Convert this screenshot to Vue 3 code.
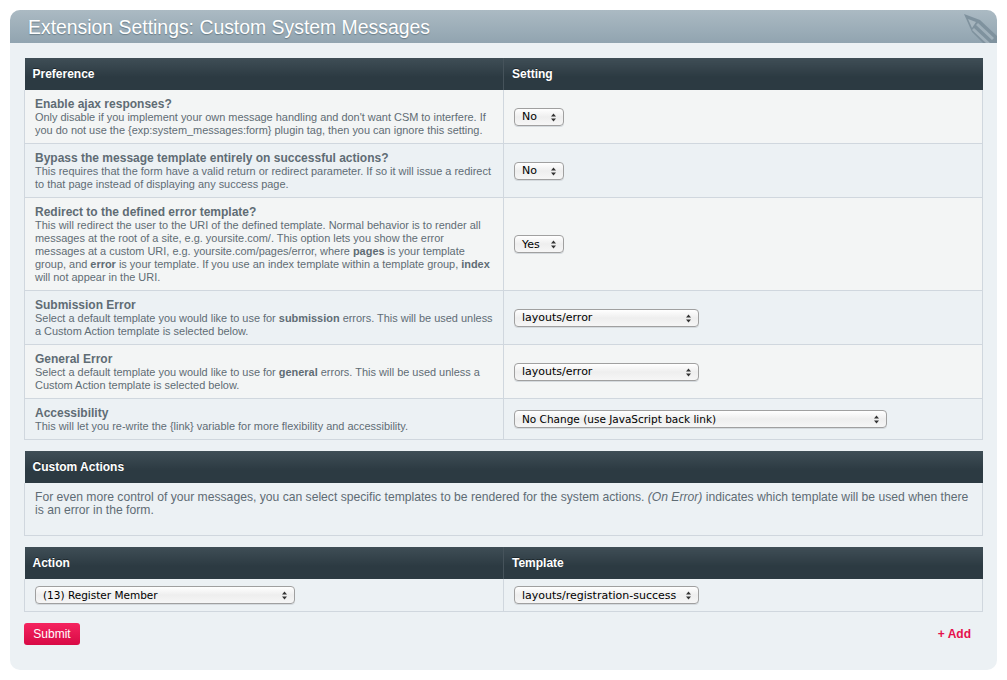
<script setup>
const settings = [
  { title: 'Enable ajax responses?', html: "Only disable if you implement your own message handling and don't want CSM to interfere. If you do not use the {exp:system_messages:form} plugin tag, then you can ignore this setting.", value: 'No', size: 'tiny' },
  { title: 'Bypass the message template entirely on successful actions?', html: 'This requires that the form have a valid return or redirect parameter. If so it will issue a redirect to that page instead of displaying any success page.', value: 'No', size: 'tiny' },
  { title: 'Redirect to the defined error template?', html: 'This will redirect the user to the URI of the defined template. Normal behavior is to render all messages at the root of a site, e.g. yoursite.com/. This option lets you show the error messages at a custom URI, e.g. yoursite.com/pages/error, where <b>pages</b> is your template group, and <b>error</b> is your template. If you use an index template within a template group, <b>index</b> will not appear in the URI.', value: 'Yes', size: 'tiny' },
  { title: 'Submission Error', html: 'Select a default template you would like to use for <b>submission</b> errors. This will be used unless a Custom Action template is selected below.', value: 'layouts/error', size: 'mid' },
  { title: 'General Error', html: 'Select a default template you would like to use for <b>general</b> errors. This will be used unless a Custom Action template is selected below.', value: 'layouts/error', size: 'mid' },
  { title: 'Accessibility', html: 'This will let you re-write the {link} variable for more flexibility and accessibility.', value: 'No Change (use JavaScript back link)', size: 'wide' },
]
</script>

<template>
  <div class="page">
    <div class="panel">
      <div class="heading">
        <h2>Extension Settings: Custom System Messages</h2>
        <svg class="pencil" width="33" height="29" viewBox="0 0 33 29">
          <path d="M0 0 L16 6 L33 22 L33 29 L19 29 L8 18 Z" fill="#7f929e" />
          <path d="M4 5 L12 8 L8 14 Z" fill="#a6b5be" />
          <path d="M14 9 L30 24 L28 26 L12 11 Z M10 14 L26 29 L22 29 L8 16 Z" fill="#a0b0ba" />
        </svg>
      </div>
      <div class="content">
        <table class="grid">
          <thead>
            <tr><th class="col-a">Preference</th><th>Setting</th></tr>
          </thead>
          <tbody>
            <tr v-for="(row, i) in settings" :key="row.title" :class="{ odd: i % 2 === 0 }">
              <td class="col-a pref">
                <strong>{{ row.title }}</strong>
                <div class="desc" v-html="row.html"></div>
              </td>
              <td class="set">
                <div class="select" :class="row.size">
                  <span>{{ row.value }}</span>
                  <svg class="arrows" width="5" height="9" viewBox="0 0 5 9"><path d="M2.5 0.5 L5 3.5 H0 Z M0 5.5 H5 L2.5 8.5 Z" fill="#333" /></svg>
                </div>
              </td>
            </tr>
          </tbody>
        </table>

        <table class="grid notes">
          <thead>
            <tr><th>Custom Actions</th></tr>
          </thead>
          <tbody>
            <tr>
              <td class="intro">For even more control of your messages, you can select specific templates to be rendered for the system actions. <em>(On Error)</em> indicates which template will be used when there is an error in the form.</td>
            </tr>
          </tbody>
        </table>

        <table class="grid actions">
          <thead>
            <tr><th class="col-a">Action</th><th>Template</th></tr>
          </thead>
          <tbody>
            <tr>
              <td class="col-a slim">
                <div class="select action">
                  <span>(13) Register Member</span>
                  <svg class="arrows" width="5" height="9" viewBox="0 0 5 9"><path d="M2.5 0.5 L5 3.5 H0 Z M0 5.5 H5 L2.5 8.5 Z" fill="#333" /></svg>
                </div>
              </td>
              <td class="slim">
                <div class="select tpl">
                  <span>layouts/registration-success</span>
                  <svg class="arrows" width="5" height="9" viewBox="0 0 5 9"><path d="M2.5 0.5 L5 3.5 H0 Z M0 5.5 H5 L2.5 8.5 Z" fill="#333" /></svg>
                </div>
              </td>
            </tr>
          </tbody>
        </table>

        <div class="foot">
          <button class="submit" type="button">Submit</button>
          <a class="add">+ Add</a>
        </div>
      </div>
    </div>
  </div>
</template>

<style>
html, body {
  background: #fff;
}
</style>

<style scoped>
.page {
  padding: 10px;
  font-family: "Liberation Sans", Arial, sans-serif;
  font-size: 10.95px;
  line-height: 13px;
  color: #5f6c74;
}

.panel {
  background: #ecf1f4;
  border-radius: 10px;
  overflow: hidden;
  height: 660px;
}

.heading {
  position: relative;
  height: 33px;
  background: linear-gradient(#abbac3, #91a4b0);
  overflow: hidden;
}

.heading h2 {
  margin: 0;
  padding-left: 18px;
  font-size: 19.4px;
  font-weight: normal;
  line-height: 35px;
  color: #fff;
  text-shadow: 0 1px 1px rgba(60, 80, 90, 0.5);
}

.pencil {
  position: absolute;
  right: 0;
  top: 4px;
}

.content {
  padding: 15px 14px 0;
}

.grid {
  width: 959px;
  border-collapse: collapse;
  table-layout: fixed;
}

.grid th,
.grid td {
  box-sizing: border-box;
}

.grid th {
  height: 32px;
  padding: 0 8px;
  text-align: left;
  font-size: 12px;
  color: #fff;
  background: linear-gradient(#3f4e56, #2c3a42 60%);
  text-shadow: 0 -1px 0 #1d272c;
  border-right: 1px solid #46535b;
}

.grid th:last-child {
  border-right: 0;
}

.grid td {
  border: 1px solid #d0d7de;
  border-top: 0;
  vertical-align: top;
}

.col-a {
  width: 479px;
}

.pref {
  padding: 7px 9px 6px 10px;
}

.odd td {
  background: #f3f5f5;
}

.pref strong {
  display: block;
  font-size: 12px;
  line-height: 14px;
}

.desc :deep(b) {
  font-weight: bold;
}

.set {
  padding: 0 10px;
  vertical-align: middle !important;
}

.select {
  position: relative;
  display: flex;
  align-items: center;
  box-sizing: border-box;
  height: 18px;
  padding-left: 7px;
  border: 1px solid #a0a0a0;
  border-radius: 4px;
  background: linear-gradient(#fff, #eeeeee 50%, #f6f6f6);
  font-family: "DejaVu Sans", sans-serif;
  font-size: 11px;
  color: #000;
  box-shadow: 0 1px 0 #d5dade;
}

.arrows {
  position: absolute;
  right: 7px;
  top: 4px;
}

.tiny { width: 50px; }
.mid { width: 185px; }
.wide { width: 373px; font-size: 10.5px; }
.action { width: 260px; font-size: 10.5px; }
.tpl { width: 185px; }

.notes {
  margin-top: 11px;
}

.intro {
  padding: 8px 10px 18px;
  font-size: 12.15px;
}

.actions {
  margin-top: 11px;
}

.slim {
  padding: 7px 10px;
  vertical-align: middle !important;
}

.foot {
  display: flex;
  justify-content: space-between;
  align-items: center;
  margin-top: 11px;
}

.submit {
  width: 56px;
  height: 22px;
  padding: 0;
  border: 0;
  border-radius: 3px;
  background: linear-gradient(#f5245f, #d80a45);
  color: #fff;
  font-family: "Liberation Sans", Arial, sans-serif;
  font-size: 12px;
}

.add {
  margin-right: 12px;
  margin-top: 1px;
  color: #e5104c;
  font-size: 12px;
  font-weight: bold;
}
</style>
